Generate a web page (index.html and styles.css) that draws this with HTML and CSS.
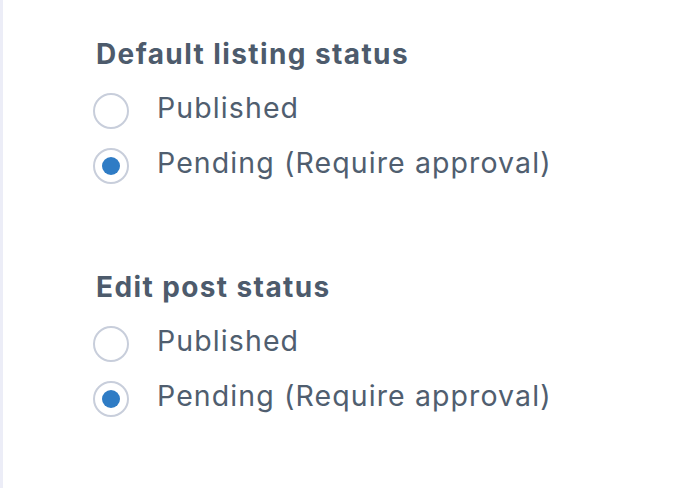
FILE: index.html
```html
<!DOCTYPE html>
<html>
<head>
<meta charset="utf-8">
<link rel="stylesheet" href="styles.css">
</head>
<body>
<div class="page">
  <div class="section">
    <div class="heading">Default listing status</div>
    <label class="row"><span class="radio"></span><span class="label">Published</span></label>
    <label class="row"><span class="radio checked"></span><span class="label">Pending (Require approval)</span></label>
  </div>
  <div class="section">
    <div class="heading">Edit post status</div>
    <label class="row"><span class="radio"></span><span class="label">Published</span></label>
    <label class="row"><span class="radio checked"></span><span class="label">Pending (Require approval)</span></label>
  </div>
</div>
</body>
</html>
```
FILE: styles.css
```css
html, body {
  margin: 0;
  padding: 0;
  background: #ffffff;
}
.page {
  width: 700px;
  height: 488px;
  box-sizing: border-box;
  border-left: 3px solid #ecedf7;
  padding: 34px 0 0 90px;
  font-family: Inter, "Liberation Sans", Arial, sans-serif;
  color: #505e6f;
  overflow: hidden;
}
.section {
  display: flex;
  flex-direction: column;
}
.section + .section {
  margin-top: 77px;
}
.heading {
  font-size: 28px;
  font-weight: 700;
  line-height: 40px;
  height: 40px;
  margin: 0 0 6px 3px;
  color: #4d5b6c;
  letter-spacing: 1.4px;
}
.row {
  display: flex;
  align-items: flex-start;
  height: 55px;
}
.radio {
  width: 36px;
  height: 36px;
  box-sizing: border-box;
  border: 2px solid #c8cedb;
  border-radius: 50%;
  margin-top: 13px;
  display: flex;
  align-items: center;
  justify-content: center;
  flex: none;
}
.radio.checked::after {
  content: "";
  width: 18px;
  height: 18px;
  border-radius: 50%;
  background: #2f7cc5;
}
.label {
  font-size: 28.5px;
  line-height: 55px;
  margin-left: 28px;
  letter-spacing: 1.1px;
}
```
